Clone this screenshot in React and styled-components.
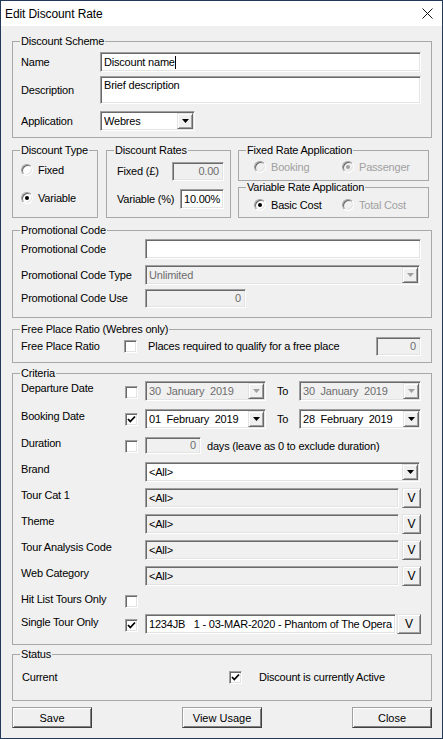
import React from 'react'
import styled, { createGlobalStyle } from 'styled-components'

const GlobalStyle = createGlobalStyle`
  html, body {
    margin: 0;
    padding: 0;
    background: #f0f0f0;
  }
  body {
    font-family: "Liberation Sans", Arial, sans-serif;
    font-size: 11px;
    letter-spacing: -0.2px;
    color: #000;
  }
  * {
    box-sizing: border-box;
  }
`;

const Window = styled.div`
  width: 443px;
  height: 739px;
  border: 1px solid #24395a;
  background: #f0f0f0;
  display: flex;
  flex-direction: column;
  overflow: hidden;
`;

const TitleBar = styled.div`
  height: 25px;
  flex: none;
  background: #fff;
  display: flex;
  align-items: center;
  justify-content: space-between;
  padding: 0 9px 0 4px;
  font-size: 12px;
  letter-spacing: -0.1px;
`;

const Body = styled.div`
  display: flex;
  flex-direction: column;
  padding: 9px 10px 0 11px;
`;

const Group = styled.fieldset`
  margin: ${p => p.mt || 0}px 0 0 ${p => p.ml || 0}px;
  padding: 0 ${p => (p.pr == null ? 10 : p.pr)}px 0 8px;
  border: 1px solid #a8a8a8;
  height: ${p => p.h}px;
  width: ${p => (p.w ? `${p.w}px` : 'auto')};
  min-width: 0;
  flex: none;
`;

const Legend = styled.legend`
  padding: 0 1px;
  margin-left: -1px;
  line-height: 13px;
  font-size: 11px;
  white-space: nowrap;
`;

const Columns = styled.div`
  display: flex;
  margin-top: ${p => p.mt || 0}px;
`;

const Stack = styled.div`
  display: flex;
  flex-direction: column;
  margin-left: ${p => p.ml || 0}px;
`;

const Row = styled.div`
  display: flex;
  align-items: ${p => p.align || 'center'};
  height: ${p => p.h}px;
  margin-top: ${p => p.mt || 0}px;
  margin-left: ${p => p.indent || 0}px;
`;

const Label = styled.span`
  flex: none;
  width: ${p => (p.w ? `${p.w}px` : 'auto')};
  margin-left: ${p => p.ml || 0}px;
  padding-top: ${p => p.pt || 0}px;
  line-height: 13px;
  white-space: nowrap;
  color: ${p => (p.disabled ? '#a0a0a0' : '#000')};
`;

const Field = styled.div`
  flex: none;
  width: ${p => p.w}px;
  height: ${p => p.h || 20}px;
  margin-left: ${p => (p.push ? 'auto' : `${p.ml || 0}px`)};
  display: flex;
  align-items: ${p => (p.multi ? 'flex-start' : 'center')};
  justify-content: ${p => (p.right ? 'flex-end' : 'flex-start')};
  padding: ${p => (p.multi ? '2px 3px 0' : p.select ? '0 1px 0 3px' : '0 4px 0 3px')};
  background: ${p => (p.disabled || p.readOnly ? '#f0f0f0' : '#fff')};
  color: ${p => (p.disabled ? '#6d6d6d' : '#000')};
  border: 1px solid;
  border-color: #a0a0a0 #fff #fff #a0a0a0;
  box-shadow: inset 1px 1px 0 #696969, inset -1px -1px 0 #e3e3e3;
  white-space: pre;
  overflow: hidden;
  line-height: 13px;
`;

const Value = styled.span`
  flex: 1;
  overflow: hidden;
  white-space: pre;
`;

const Caret = styled.span`
  display: inline-block;
  width: 1px;
  height: 13px;
  background: #000;
`;

const DropButton = styled.span`
  flex: none;
  width: 16px;
  height: 16px;
  display: flex;
  align-items: center;
  justify-content: center;
  background: #f0f0f0;
  border: 1px solid;
  border-color: #e3e3e3 #696969 #696969 #e3e3e3;
  box-shadow: inset 1px 1px 0 #fff, inset -1px -1px 0 #a0a0a0;
`;

const VButton = styled.button`
  flex: none;
  width: ${p => p.w}px;
  height: 20px;
  margin-left: ${p => p.ml || 0}px;
  padding: 0;
  font: inherit;
  font-size: 12px;
  color: #000;
  background: #f0f0f0;
  border: 1px solid;
  border-color: #e3e3e3 #696969 #696969 #e3e3e3;
  box-shadow: inset 1px 1px 0 #fff, inset -1px -1px 0 #a0a0a0;
`;

const CheckBox = styled.span`
  flex: none;
  width: 13px;
  height: 13px;
  margin-top: ${p => p.mt || 0}px;
  margin-left: ${p => p.ml || 0}px;
  display: flex;
  align-items: center;
  justify-content: center;
  background: #fff;
  border: 1px solid;
  border-color: #a0a0a0 #fff #fff #a0a0a0;
  box-shadow: inset 1px 1px 0 #696969, inset -1px -1px 0 #e3e3e3;
`;

const CheckSlot = styled.div`
  flex: none;
  width: 20px;
`;

const RadioCircle = styled.span`
  flex: none;
  width: 12px;
  height: 12px;
  border-radius: 50%;
  display: flex;
  align-items: center;
  justify-content: center;
  background: ${p => (p.disabled ? '#f0f0f0' : '#fff')};
  border: 1px solid;
  border-color: #a0a0a0 #fff #fff #a0a0a0;
  box-shadow: inset 1px 1px 0 #696969, inset -1px -1px 0 #e3e3e3;
`;

const Dot = styled.span`
  width: 4px;
  height: 4px;
  border-radius: 50%;
  background: ${p => (p.disabled ? '#a0a0a0' : '#000')};
`;

const Option = styled.div`
  flex: none;
  display: flex;
  align-items: center;
  width: ${p => (p.w ? `${p.w}px` : 'auto')};
  gap: ${p => p.gap || 5}px;
`;

const ToLabel = styled.span`
  flex: none;
  width: ${p => p.w}px;
  height: 20px;
  display: flex;
  align-items: center;
  padding-left: 11px;
`;

const Note = styled.span`
  height: ${p => p.h}px;
  display: flex;
  align-items: center;
  margin-left: 6px;
  white-space: nowrap;
`;

const ButtonBar = styled.div`
  display: flex;
  justify-content: space-between;
  margin-top: 6px;
`;

const PushButton = styled.button`
  width: 80px;
  height: 21px;
  padding: 0;
  font: inherit;
  font-size: 11px;
  color: #000;
  background: #f0f0f0;
  border: 1px solid;
  border-color: #a0a0a0 #404040 #404040 #a0a0a0;
  box-shadow: inset 1px 1px 0 #fff, inset -1px -1px 0 #808080;
`;

const CloseIcon = () => (
  <svg width="11" height="11" viewBox="0 0 11 11">
    <path d="M0.5 0.5 L10.5 10.5 M10.5 0.5 L0.5 10.5" stroke="#111" strokeWidth="1" fill="none" />
  </svg>
);

const Arrow = ({ disabled }) => (
  <svg width="7" height="4" viewBox="0 0 7 4">
    <polygon points="0,0 7,0 3.5,4" fill={disabled ? '#a0a0a0' : '#000'} />
  </svg>
);

const Check = ({ checked, mt, ml }) => (
  <CheckBox mt={mt} ml={ml}>
    {checked && (
      <svg width="9" height="9" viewBox="0 0 9 9">
        <polyline points="1,4 3.3,6.5 8,1.5" stroke="#000" strokeWidth="1.8" fill="none" />
      </svg>
    )}
  </CheckBox>
);

const Radio = ({ checked, disabled, label, w }) => (
  <Option w={w}>
    <RadioCircle disabled={disabled}>{checked && <Dot disabled={disabled} />}</RadioCircle>
    <Label disabled={disabled}>{label}</Label>
  </Option>
);

const Select = ({ w, value, disabled }) => (
  <Field w={w} select disabled={disabled}>
    <Value>{value}</Value>
    <DropButton>
      <Arrow disabled={disabled} />
    </DropButton>
  </Field>
);

const lookups = ['Tour Cat 1', 'Theme', 'Tour Analysis Code', 'Web Category'];

export default function App() {
  return (
    <>
      <GlobalStyle />
      <Window>
        <TitleBar>
          <span>Edit Discount Rate</span>
          <CloseIcon />
        </TitleBar>
        <Body>
          <Group h={103}>
            <Legend>Discount Scheme</Legend>
            <Row h={20} mt={4}>
              <Label w={79}>Name</Label>
              <Field w={321}>
                Discount name
                <Caret />
              </Field>
            </Row>
            <Row h={28} mt={4}>
              <Label w={79}>Description</Label>
              <Field w={321} h={28} multi>Brief description</Field>
            </Row>
            <Row h={20} mt={7}>
              <Label w={79}>Application</Label>
              <Select w={95} value="Webres" />
            </Row>
          </Group>

          <Columns mt={6}>
            <Group h={74} w={86} pr={2}>
              <Legend>Discount Type</Legend>
              <Row h={20} mt={3}>
                <Radio label="Fixed" />
              </Row>
              <Row h={20} mt={8}>
                <Radio label="Variable" checked />
              </Row>
            </Group>
            <Group h={74} w={125} ml={8} pr={6}>
              <Legend>Discount Rates</Legend>
              <Row h={19} mt={5} indent={2}>
                <Label>Fixed (£)</Label>
                <Field w={52} h={19} right disabled push>0.00</Field>
              </Row>
              <Row h={20} mt={8} indent={2}>
                <Label>Variable (%)</Label>
                <Field w={44} push>10.00%</Field>
              </Row>
            </Group>
            <Stack ml={7}>
              <Group h={37} w={191}>
                <Legend>Fixed Rate Application</Legend>
                <Row h={20} indent={7}>
                  <Radio w={88} label="Booking" disabled />
                  <Radio label="Passenger" disabled checked />
                </Row>
              </Group>
              <Group h={37} w={191}>
                <Legend>Variable Rate Application</Legend>
                <Row h={20} mt={1} indent={7}>
                  <Radio w={88} label="Basic Cost" checked />
                  <Radio label="Total Cost" disabled />
                </Row>
              </Group>
            </Stack>
          </Columns>

          <Group h={94} mt={6}>
            <Legend>Promotional Code</Legend>
            <Row h={20} mt={2}>
              <Label w={124}>Promotional Code</Label>
              <Field w={276} />
            </Row>
            <Row h={20} mt={6}>
              <Label w={124}>Promotional Code Type</Label>
              <Select w={275} value="Unlimited" disabled />
            </Row>
            <Row h={19} mt={4}>
              <Label w={124}>Promotional Code Use</Label>
              <Field w={101} h={19} right disabled>0</Field>
            </Row>
          </Group>

          <Group h={40} mt={5}>
            <Legend>Free Place Ratio (Webres only)</Legend>
            <Row h={20}>
              <Label w={103}>Free Place Ratio</Label>
              <Check />
              <Label ml={11}>Places required to qualify for a free place</Label>
              <Field w={45} h={19} right disabled push>0</Field>
            </Row>
          </Group>

          <Group h={278} mt={4}>
            <Legend>Criteria</Legend>
            <Row h={28} mt={1} align="flex-start">
              <Label w={104} pt={1}>Departure Date</Label>
              <CheckSlot><Check mt={5} /></CheckSlot>
              <Select w={121} value="30  January  2019" disabled />
              <ToLabel w={33}>To</ToLabel>
              <Select w={122} value="30  January  2019" disabled />
            </Row>
            <Row h={28} align="flex-start">
              <Label w={104} pt={1}>Booking Date</Label>
              <CheckSlot><Check mt={4} checked /></CheckSlot>
              <Select w={121} value="01  February  2019" />
              <ToLabel w={33}>To</ToLabel>
              <Select w={122} value="28  February  2019" />
            </Row>
            <Row h={25} align="flex-start">
              <Label w={104} pt={0}>Duration</Label>
              <CheckSlot><Check mt={3} /></CheckSlot>
              <Field w={56} h={17} right disabled>0</Field>
              <Note h={18}>days (leave as 0 to exclude duration)</Note>
            </Row>
            <Row h={26} align="flex-start">
              <Label w={104} pt={1}>Brand</Label>
              <CheckSlot />
              <Select w={275} value="<All>" />
            </Row>
            {lookups.map(name => (
              <Row key={name} h={26} align="flex-start">
                <Label w={104} pt={1}>{name}</Label>
                <CheckSlot />
                <Field w={254} readOnly>{'<All>'}</Field>
                <VButton w={19} ml={3}>V</VButton>
              </Row>
            ))}
            <Row h={22} align="flex-start">
              <Label w={104} pt={1}>Hit List Tours Only</Label>
              <CheckSlot><Check mt={3} /></CheckSlot>
            </Row>
            <Row h={20} align="flex-start">
              <Label w={104} pt={2}>Single Tour Only</Label>
              <CheckSlot><Check mt={5} checked /></CheckSlot>
              <Field w={251}>1234JB   1 - 03-MAR-2020 - Phantom of The Opera</Field>
              <VButton w={24} ml={1}>V</VButton>
            </Row>
          </Group>

          <Group h={53} mt={3}>
            <Legend>Status</Legend>
            <Row h={20} mt={6} indent={1}>
              <Label w={207}>Current</Label>
              <Check checked />
              <Label ml={17}>Discount is currently Active</Label>
            </Row>
          </Group>

          <ButtonBar>
            <PushButton>Save</PushButton>
            <PushButton>View Usage</PushButton>
            <PushButton>Close</PushButton>
          </ButtonBar>
        </Body>
      </Window>
    </>
  );
}
